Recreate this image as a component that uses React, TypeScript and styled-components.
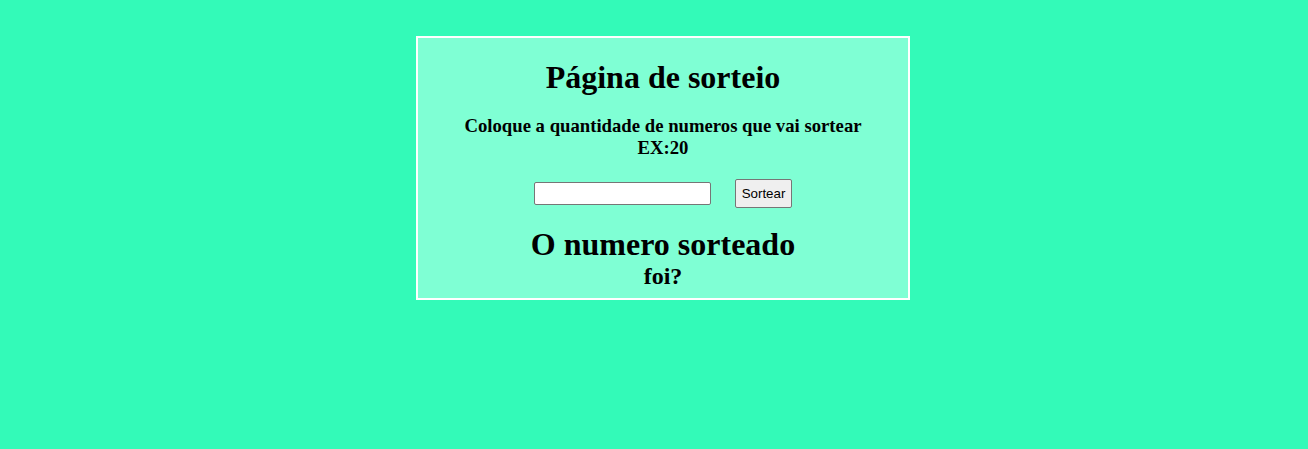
import React from "react";
import styled, { createGlobalStyle } from "styled-components";

const Global = createGlobalStyle`
  html, body { margin: 0; padding: 0; }
  body {
    background: #33fab8;
    font-family: "Liberation Serif", "Times New Roman", serif;
    color: #000;
  }
`;

const Page = styled.div`
  display: flex;
  justify-content: center;
  padding: 36px 0 0 18px;
  min-height: 449px;
  box-sizing: border-box;
`;

const Card = styled.div`
  width: 490px;
  height: 260px;
  border: 2px solid #ffffff;
  background: #7fffd4;
  text-align: center;
  display: flex;
  flex-direction: column;
  align-items: center;
`;

const Title = styled.h1`
  font-size: 32px;
  font-weight: bold;
  margin: 21px 0 0;
  line-height: 37px;
`;

const Subtitle = styled.h3`
  font-size: 18.72px;
  font-weight: bold;
  margin: 19px 0 0;
  line-height: 22px;
`;

const Row = styled.div`
  display: flex;
  align-items: center;
  gap: 24px;
  margin-top: 20px;
`;

const Input = styled.input`
  width: 171px;
  height: 19px;
  padding: 1px 2px;
  border: 1px solid #767676;
  border-radius: 2px;
  background: #fff;
  box-sizing: content-box;
`;

const Button = styled.button`
  height: 29px;
  padding: 1px 6px;
  font-family: Arial, "Liberation Sans", sans-serif;
  font-size: 13.33px;
  color: #000;
  background: #efefef;
  border: 1px solid #767676;
  border-radius: 2px;
`;

const Result = styled.h1`
  font-size: 32px;
  font-weight: bold;
  margin: 18px 0 0;
  line-height: 37px;
`;

const Question = styled.h2`
  font-size: 24px;
  font-weight: bold;
  margin: 0;
  line-height: 26px;
`;

export default function App() {
  return (
    <>
      <Global />
      <Page>
        <Card>
          <Title>Página de sorteio</Title>
          <Subtitle>
            Coloque a quantidade de numeros que vai sortear
            <br />
            EX:20
          </Subtitle>
          <Row>
            <Input type="text" />
            <Button>Sortear</Button>
          </Row>
          <Result>O numero sorteado</Result>
          <Question>foi?</Question>
        </Card>
      </Page>
    </>
  );
}
